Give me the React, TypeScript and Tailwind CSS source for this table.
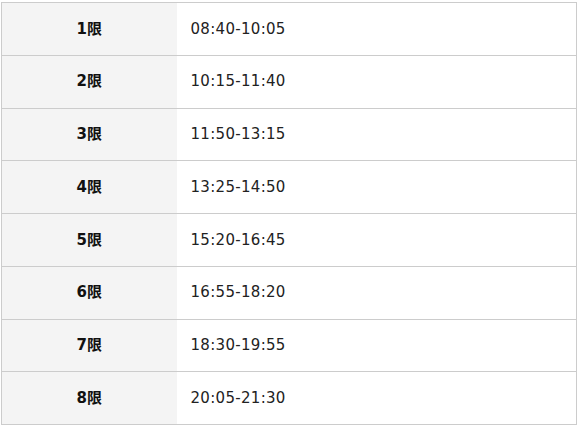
const periods = [
  { label: "1限", time: "08:40-10:05" },
  { label: "2限", time: "10:15-11:40" },
  { label: "3限", time: "11:50-13:15" },
  { label: "4限", time: "13:25-14:50" },
  { label: "5限", time: "15:20-16:45" },
  { label: "6限", time: "16:55-18:20" },
  { label: "7限", time: "18:30-19:55" },
  { label: "8限", time: "20:05-21:30" },
];

export default function App() {
  return (
    <div className="w-[579px] h-[429px] bg-white pt-[2px] pl-[1px]">
      <table
        className="w-[576px] border-collapse border border-[#cccccc] text-[15px] text-[#222222]"
        style={{ fontFamily: '"DejaVu Sans", Verdana, "Noto Sans CJK JP", sans-serif' }}
      >
        <tbody>
          {periods.map((p) => (
            <tr key={p.label} className="h-[52.75px] border-b border-[#cccccc]">
              <th className="w-[175px] bg-[#f4f4f4] text-center font-bold text-[#111111]">
                {p.label}
              </th>
              <td className="pl-[14px] tracking-[0.3px]">{p.time}</td>
            </tr>
          ))}
        </tbody>
      </table>
    </div>
  );
}
